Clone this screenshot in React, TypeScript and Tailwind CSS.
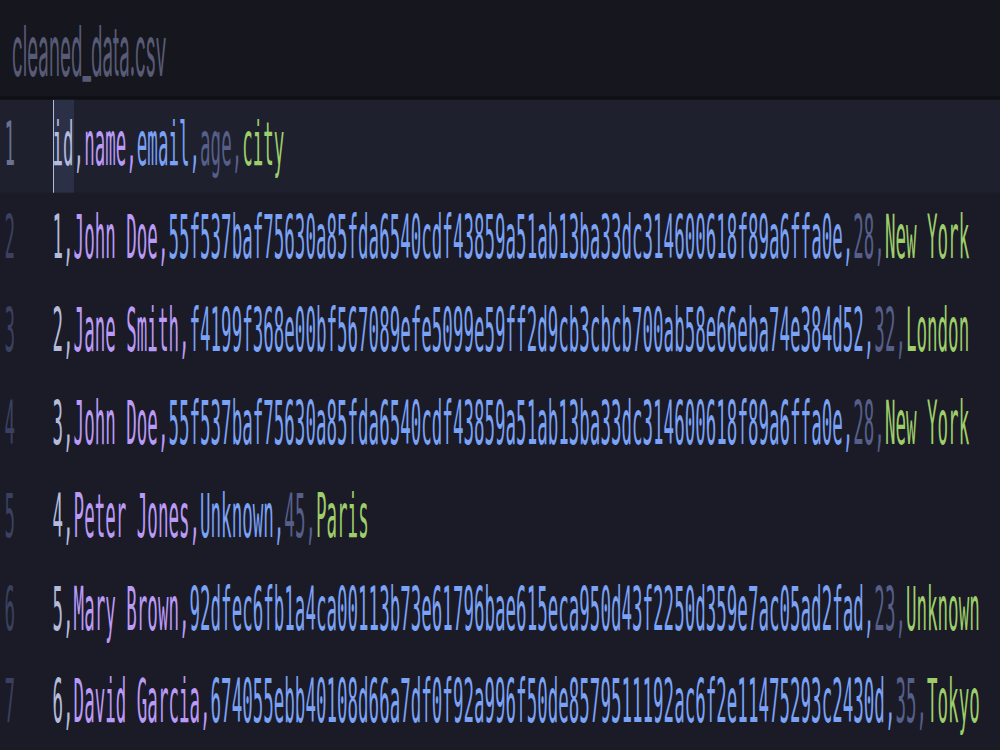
const rows: string[][] = [
  ["id", "name", "email", "age", "city"],
  ["1", "John Doe", "55f537baf75630a85fda6540cdf43859a51ab13ba33dc314600618f89a6ffa0e", "28", "New York"],
  ["2", "Jane Smith", "f4199f368e00bf567089efe5099e59ff2d9cb3cbcb700ab58e66eba74e384d52", "32", "London"],
  ["3", "John Doe", "55f537baf75630a85fda6540cdf43859a51ab13ba33dc314600618f89a6ffa0e", "28", "New York"],
  ["4", "Peter Jones", "Unknown", "45", "Paris"],
  ["5", "Mary Brown", "92dfec6fb1a4ca00113b73e61796bae615eca950d43f2250d359e7ac05ad2fad", "23", "Unknown"],
  ["6", "David Garcia", "674055ebb40108d66a7df0f92a996f50de8579511192ac6f2e11475293c2430d", "35", "Tokyo"],
];

// field colours, by column
const colors = ["text-[#b4bbdc]", "text-[#bb9af7]", "text-[#7aa2f7]", "text-[#565f89]", "text-[#9ece6a]"];

const Line = ({ n, cells }: { n: number; cells: string[] }) => {
  const active = n === 1;
  return (
    <div className={`flex h-[26.9px] leading-[26.9px] ${active ? "bg-[#1e202e]" : ""}`}>
      <div className={`w-[52.5px] shrink-0 pl-[4.5px] ${active ? "text-[#6b7192]" : "text-[#3b4060]"}`}>{n}</div>
      <div className="whitespace-pre">
        {cells.map((c, i) => {
          const comma = i < cells.length - 1 ? "," : "";
          if (active && i === 0) {
            return (
              <span key={i} className={colors[0]}>
                <span className="inline-block h-[26.9px] align-top bg-[#2c3047] shadow-[inset_1px_0_0_#b4bbdc]">{c}</span>
                {comma}
              </span>
            );
          }
          return (
            <span key={i} className={colors[i]}>
              {c}
              {comma}
            </span>
          );
        })}
      </div>
    </div>
  );
};

export default function App() {
  return (
    <div className="w-[1000px] h-[750px] overflow-hidden bg-[#1a1b26]">
      <div className="w-[1000px] h-[218px] origin-top-left scale-y-[3.44]">
        <div className="h-[29.4px] bg-[#16161e] border-b-[1.2px] border-[#0e0f14] pl-[12px] pt-[5.8px]">
          <div className="font-['Inter',sans-serif] text-[18.75px] leading-none text-[#575b75] origin-top-left scale-y-[1.08]">cleaned_data.csv</div>
        </div>
        <div className="font-['DejaVu_Sans_Mono',monospace] text-[17.5px]">
          {rows.map((r, i) => (
            <Line key={i} n={i + 1} cells={r} />
          ))}
        </div>
      </div>
    </div>
  );
}
